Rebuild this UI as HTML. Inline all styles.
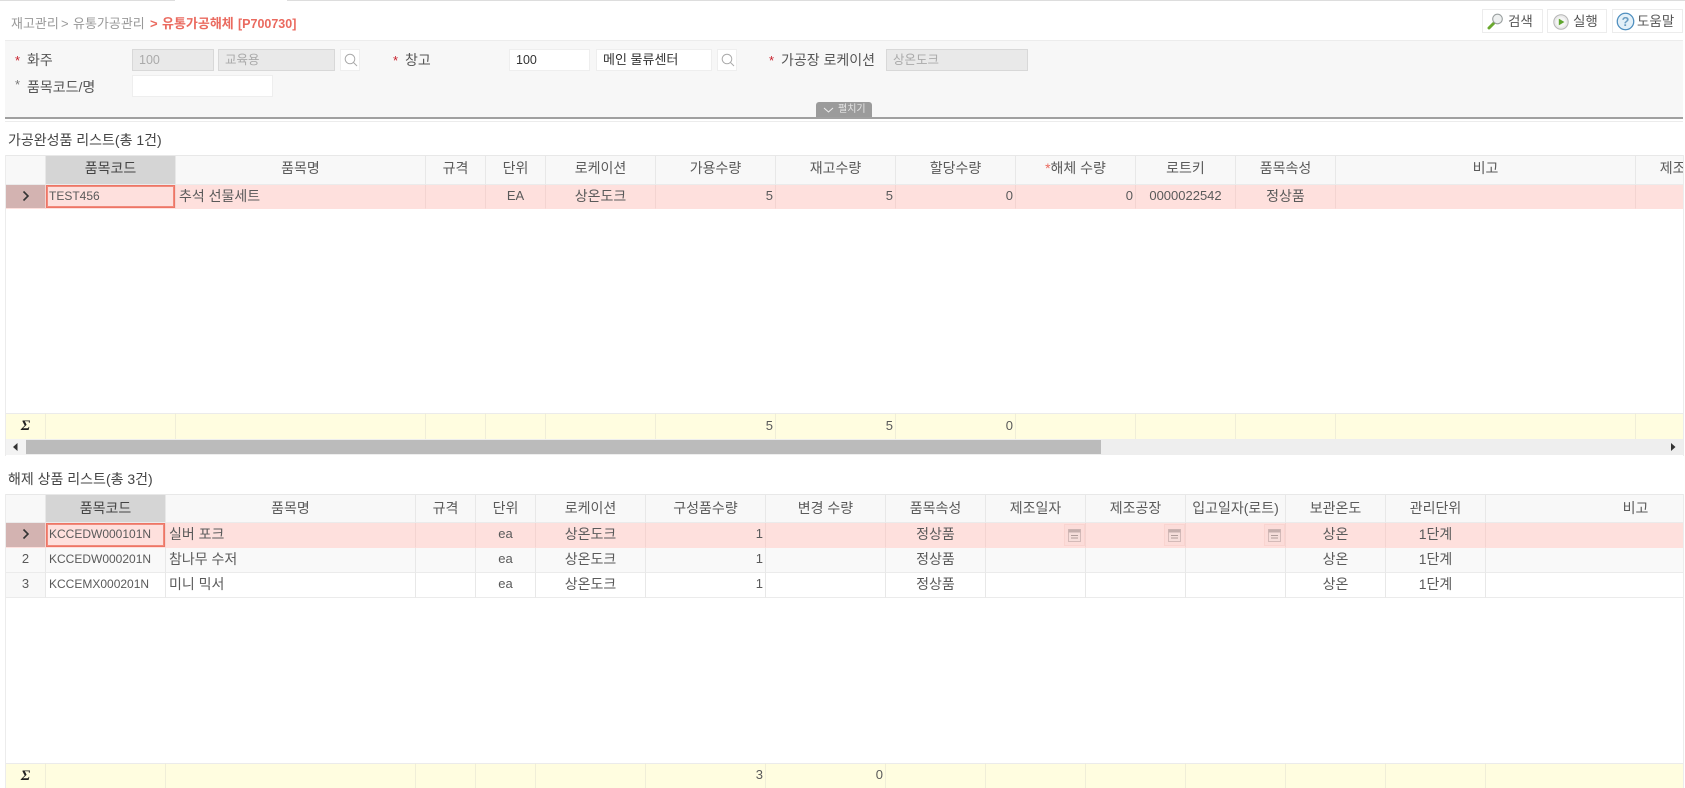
<!DOCTYPE html>
<html lang="ko">
<head>
<meta charset="utf-8">
<title>유통가공해체</title>
<style>
html,body{margin:0;padding:0;width:1685px;height:788px;overflow:hidden;background:#fff;}
body{position:relative;font-family:"Liberation Sans","Noto Sans CJK KR",sans-serif;font-size:13px;color:#555;}
.a{position:absolute;white-space:nowrap;}
.btn{position:absolute;top:9px;height:24px;box-sizing:border-box;border:1px solid #ececec;background:#fff;font-size:13.5px;line-height:24px;color:#555;}
.lbl{position:absolute;font-size:14px;line-height:20px;color:#555;white-space:nowrap;}
.star{position:absolute;color:#c8202c;font-size:13px;line-height:20px;}
.inp{position:absolute;box-sizing:border-box;height:22px;line-height:20px;padding-left:6px;font-size:12.5px;background:#fff;border:1px solid #eee;color:#333;white-space:nowrap;}
.inp.d{background:#e9e9e9;border-color:#d8d8d8;color:#aaa;}
.sb{position:absolute;top:49px;width:20px;height:22px;background:#fff;border:1px solid #eee;box-sizing:border-box;}
.wrap{position:absolute;overflow:hidden;}
table{border-collapse:separate;border-spacing:0;table-layout:fixed;position:absolute;left:0;}
td,th{box-sizing:border-box;border-right:1px solid #e8e8e8;border-bottom:1px solid #ebebeb;padding:0 0 2px 0;font-weight:400;color:#5a5a5a;font-size:14px;line-height:18px;white-space:nowrap;overflow:hidden;text-align:center;}
th{background:#f8f8f8;border-top:1px solid #e8e8e8;padding-bottom:4px;}
th.sel{background:#d5d5d5;color:#444;}
.low th{padding-bottom:2px;}
td.l{text-align:left;padding-left:3px;}
td.r{text-align:right;padding-right:2px;font-size:13px;}
td.c{font-size:12px;}
td.n{font-size:13px;}
tr.s td{background:#fee0dd;border-right-color:#f3d4d1;border-bottom-color:#fee0dd;}
tr.s td.rh{background:#d3b3b1;}
tr.s td.cur{box-shadow:inset 0 0 0 1px #ee7565,inset 0 0 0 2px #f08a7c;}
tr.z td{background:#f9f9f9;}
tr.f td{background:#fffde0;border-right-color:#f0eed8;border-bottom:0;border-top:1px solid #ebebeb;}
td.rh{background:#f8f8f8;}
td.sg{font:italic 700 15px 'Liberation Serif',serif;color:#222;padding:0;}
.cal{position:absolute;width:21px;height:22px;background:#fcdcd9;border:1px solid #f9d4d0;box-sizing:border-box;}
.br{position:absolute;top:14px;line-height:20px;font-size:13px;color:#999;white-space:nowrap;}
.br.h{color:#ea6a5f;font-weight:700;}
.tt{position:absolute;left:8px;line-height:20px;font-size:14px;color:#444;white-space:nowrap;}
</style>
</head>
<body>
<div class="a" style="left:0;top:0;width:175px;height:1px;background:#ddd"></div>
<div class="a" style="left:287px;top:0;width:1398px;height:1px;background:#ddd"></div>

<span class="br" style="left:11px">재고관리</span>
<span class="br" style="left:61px">&gt;</span>
<span class="br" style="left:73px">유통가공관리</span>
<span class="br h" style="left:150px">&gt;</span>
<span class="br h" style="left:162px">유통가공해체</span>
<span class="br h" style="left:238px;font-size:12.5px">[P700730]</span>

<div class="btn" style="left:1482px;width:61px;padding-left:25px">검색
  <svg class="a" style="left:4px;top:3px" width="17" height="17" viewBox="0 0 17 17"><path d="M2 15 L7 10" stroke="#6aa82e" stroke-width="3" stroke-linecap="round"/><circle cx="10.5" cy="6" r="4.8" fill="#eef0f0" stroke="#9aa0a0" stroke-width="1.1"/></svg>
</div>
<div class="btn" style="left:1547px;width:60px;padding-left:25px">실행
  <svg class="a" style="left:5px;top:4px" width="16" height="16" viewBox="0 0 16 16"><circle cx="8" cy="8" r="7.2" fill="#eaeaea" stroke="#b5b5b5"/><circle cx="8" cy="8" r="5" fill="#f5f5f5"/><path d="M5.8 4.6 L11.4 8 L5.8 11.4Z" fill="#5ea52e"/></svg>
</div>
<div class="btn" style="left:1612px;width:71px;padding-left:24px">도움말
  <svg class="a" style="left:3px;top:2px" width="19" height="19" viewBox="0 0 18 18"><circle cx="9" cy="9" r="7.8" fill="#e3f0f8" stroke="#4f8fbf" stroke-width="1.2"/><text x="9" y="13.2" text-anchor="middle" font-family="Liberation Sans" font-size="12" font-weight="700" fill="#6b9dc2">?</text></svg>
</div>

<div class="a" style="left:5px;top:40px;width:1678px;height:77px;background:#f7f7f7;border-top:1px solid #ececec"></div>
<div class="a" style="left:5px;top:117px;width:1678px;height:2px;background:#a0a0a0"></div>
<div class="a" style="left:5px;top:121px;width:1678px;height:1px;background:#ececec"></div>

<span class="star" style="left:15px;top:51px">*</span><span class="lbl" style="left:27px;top:50px">화주</span>
<div class="inp d" style="left:132px;top:49px;width:82px">100</div>
<div class="inp d" style="left:218px;top:49px;width:117px">교육용</div>
<div class="sb" style="left:340px"><svg class="a" style="left:2px;top:2px" width="16" height="16" viewBox="0 0 16 16"><circle cx="7" cy="7" r="4.8" fill="none" stroke="#aaa"/><path d="M10.5 10.5 L14 14" stroke="#aaa"/></svg></div>
<span class="star" style="left:393px;top:51px">*</span><span class="lbl" style="left:405px;top:50px">창고</span>
<div class="inp" style="left:509px;top:49px;width:81px">100</div>
<div class="inp" style="left:596px;top:49px;width:116px;font-size:13px">메인 물류센터</div>
<div class="sb" style="left:717px"><svg class="a" style="left:2px;top:2px" width="16" height="16" viewBox="0 0 16 16"><circle cx="7" cy="7" r="4.8" fill="none" stroke="#aaa"/><path d="M10.5 10.5 L14 14" stroke="#aaa"/></svg></div>
<span class="star" style="left:769px;top:51px">*</span><span class="lbl" style="left:781px;top:50px">가공장 로케이션</span>
<div class="inp d" style="left:886px;top:49px;width:142px">상온도크</div>
<span class="star" style="left:15px;top:75px;color:#777">*</span><span class="lbl" style="left:27px;top:77px">품목코드/명</span>
<div class="inp" style="left:132px;top:75px;width:141px"></div>

<div class="a" style="left:816px;top:102px;width:56px;height:15px;background:#9b9b9b;border-radius:3px 3px 0 0;color:#e4e4e4;font-size:10px;line-height:15px;padding-left:22px;box-sizing:border-box">펼치기
  <svg class="a" style="left:7px;top:5px" width="11" height="6" viewBox="0 0 11 6"><path d="M1 1 L5.5 5 L10 1" fill="none" stroke="#eee"/></svg>
</div>

<div class="tt" style="top:130px">가공완성품 리스트(총 1건)</div>

<div class="a" style="left:5px;top:155px;width:1px;height:301px;background:#ececec"></div>
<div class="a" style="left:1683px;top:155px;width:1px;height:301px;background:#ececec"></div>
<div class="wrap" style="left:6px;top:155px;width:1677px;height:54px">
<table style="top:0;width:1680px">
<colgroup><col style="width:40px"><col style="width:130px"><col style="width:250px"><col style="width:60px"><col style="width:60px"><col style="width:110px"><col style="width:120px"><col style="width:120px"><col style="width:120px"><col style="width:120px"><col style="width:100px"><col style="width:100px"><col style="width:300px"><col style="width:100px"></colgroup>
<tr style="height:30px"><th></th><th class="sel">품목코드</th><th>품목명</th><th>규격</th><th>단위</th><th>로케이션</th><th>가용수량</th><th>재고수량</th><th>할당수량</th><th><span style="color:#ea6a5f">*</span>해체 수량</th><th>로트키</th><th>품목속성</th><th>비고</th><th>제조일자</th></tr>
<tr class="s" style="height:24px"><td class="rh"><svg width="8" height="12" viewBox="0 0 8 12" style="display:block;margin:0 auto"><path d="M1.5 1.5 L6 6 L1.5 10.5" fill="none" stroke="#333" stroke-width="1.6"/></svg></td><td class="l cur c">TEST456</td><td class="l">추석 선물세트</td><td></td><td class="n">EA</td><td>상온도크</td><td class="r">5</td><td class="r">5</td><td class="r">0</td><td class="r">0</td><td class="n">0000022542</td><td>정상품</td><td></td><td></td></tr>
</table></div>

<div class="wrap" style="left:6px;top:413px;width:1677px;height:26px">
<table style="top:0;width:1680px">
<colgroup><col style="width:40px"><col style="width:130px"><col style="width:250px"><col style="width:60px"><col style="width:60px"><col style="width:110px"><col style="width:120px"><col style="width:120px"><col style="width:120px"><col style="width:120px"><col style="width:100px"><col style="width:100px"><col style="width:300px"><col style="width:100px"></colgroup>
<tr class="f" style="height:26px"><td class="sg">Σ</td><td></td><td></td><td></td><td></td><td></td><td class="r">5</td><td class="r">5</td><td class="r">0</td><td></td><td></td><td></td><td></td><td></td></tr>
</table></div>

<div class="a" style="left:6px;top:439px;width:1677px;height:16px;background:#eee"></div>
<div class="a" style="left:6px;top:439px;width:20px;height:16px;background:#f3f3f3"></div>
<div class="a" style="left:26px;top:440px;width:1075px;height:14px;background:#bbb"></div>
<svg class="a" style="left:13px;top:443px" width="5" height="8" viewBox="0 0 5 8"><path d="M4.5 0 L0 4 L4.5 8Z" fill="#333"/></svg>
<svg class="a" style="left:1671px;top:443px" width="5" height="8" viewBox="0 0 5 8"><path d="M0 0 L4.5 4 L0 8Z" fill="#333"/></svg>

<div class="tt" style="top:469px">해제 상품 리스트(총 3건)</div>

<div class="a" style="left:5px;top:494px;width:1px;height:294px;background:#ececec"></div>
<div class="a" style="left:1683px;top:494px;width:1px;height:294px;background:#ececec"></div>
<div class="wrap" style="left:6px;top:494px;width:1677px;height:104px">
<table class="low" style="top:0;width:1780px">
<colgroup><col style="width:40px"><col style="width:120px"><col style="width:250px"><col style="width:60px"><col style="width:60px"><col style="width:110px"><col style="width:120px"><col style="width:120px"><col style="width:100px"><col style="width:100px"><col style="width:100px"><col style="width:100px"><col style="width:100px"><col style="width:100px"><col style="width:300px"></colgroup>
<tr style="height:29px"><th></th><th class="sel">품목코드</th><th>품목명</th><th>규격</th><th>단위</th><th>로케이션</th><th>구성품수량</th><th>변경 수량</th><th>품목속성</th><th>제조일자</th><th>제조공장</th><th>입고일자(로트)</th><th>보관온도</th><th>관리단위</th><th>비고</th></tr>
<tr class="s" style="height:25px"><td class="rh"><svg width="8" height="12" viewBox="0 0 8 12" style="display:block;margin:0 auto"><path d="M1.5 1.5 L6 6 L1.5 10.5" fill="none" stroke="#333" stroke-width="1.6"/></svg></td><td class="l cur c">KCCEDW000101N</td><td class="l">실버 포크</td><td></td><td class="n">ea</td><td>상온도크</td><td class="r">1</td><td></td><td>정상품</td><td></td><td></td><td></td><td>상온</td><td>1단계</td><td></td></tr>
<tr class="z" style="height:25px"><td class="rh n">2</td><td class="l c">KCCEDW000201N</td><td class="l">참나무 수저</td><td></td><td class="n">ea</td><td>상온도크</td><td class="r">1</td><td></td><td>정상품</td><td></td><td></td><td></td><td>상온</td><td>1단계</td><td></td></tr>
<tr style="height:25px"><td class="rh n">3</td><td class="l c">KCCEMX000201N</td><td class="l">미니 믹서</td><td></td><td class="n">ea</td><td>상온도크</td><td class="r">1</td><td></td><td>정상품</td><td></td><td></td><td></td><td>상온</td><td>1단계</td><td></td></tr>
</table></div>

<div class="cal" style="left:1064px;top:524px"><svg class="a" style="left:3px;top:3px" width="13" height="14" viewBox="0 0 13 14"><rect x="0.5" y="1.5" width="12" height="12" fill="#f6dedb" stroke="#d4bab8"/><rect x="0.5" y="1.5" width="12" height="3" fill="#c4aeac"/><path d="M3 7.5H10M3 10H10" stroke="#b09c9a"/></svg></div>
<div class="cal" style="left:1164px;top:524px"><svg class="a" style="left:3px;top:3px" width="13" height="14" viewBox="0 0 13 14"><rect x="0.5" y="1.5" width="12" height="12" fill="#f6dedb" stroke="#d4bab8"/><rect x="0.5" y="1.5" width="12" height="3" fill="#c4aeac"/><path d="M3 7.5H10M3 10H10" stroke="#b09c9a"/></svg></div>
<div class="cal" style="left:1264px;top:524px"><svg class="a" style="left:3px;top:3px" width="13" height="14" viewBox="0 0 13 14"><rect x="0.5" y="1.5" width="12" height="12" fill="#f6dedb" stroke="#d4bab8"/><rect x="0.5" y="1.5" width="12" height="3" fill="#c4aeac"/><path d="M3 7.5H10M3 10H10" stroke="#b09c9a"/></svg></div>

<div class="wrap" style="left:6px;top:763px;width:1677px;height:25px">
<table style="top:0;width:1780px">
<colgroup><col style="width:40px"><col style="width:120px"><col style="width:250px"><col style="width:60px"><col style="width:60px"><col style="width:110px"><col style="width:120px"><col style="width:120px"><col style="width:100px"><col style="width:100px"><col style="width:100px"><col style="width:100px"><col style="width:100px"><col style="width:100px"><col style="width:300px"></colgroup>
<tr class="f" style="height:25px"><td class="sg">Σ</td><td></td><td></td><td></td><td></td><td></td><td class="r">3</td><td class="r">0</td><td></td><td></td><td></td><td></td><td></td><td></td><td></td></tr>
</table></div>
</body>
</html>
